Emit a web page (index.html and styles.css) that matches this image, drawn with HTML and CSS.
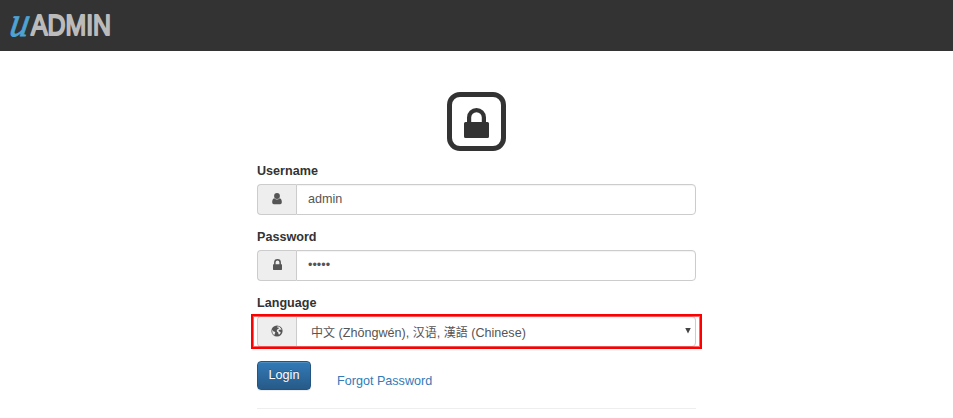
FILE: index.html
```html
<!DOCTYPE html>
<html lang="en">
<head>
<meta charset="utf-8">
<title>uAdmin</title>
<link rel="stylesheet" href="styles.css">
</head>
<body>
<header class="navbar">
  <svg class="logo" width="130" height="51" viewBox="0 0 130 51" role="img" aria-label="uADMIN">
    <text class="logo-u" transform="translate(8.500 35.500) skewX(-10)" x="0" y="0" textLength="19" lengthAdjust="spacingAndGlyphs">u</text>
    <text class="logo-admin" x="31" y="34.500" textLength="80" lengthAdjust="spacingAndGlyphs">ADMIN</text>
  </svg>
</header>
<main class="login">
  <div class="badge">
    <svg width="25" height="30" viewBox="0 0 25 30"><path fill="#333" fill-rule="evenodd" d="M3 14V9.500a9.500 9.500 0 0 1 19 0V14h1.500a1.500 1.500 0 0 1 1.500 1.500v13a1.500 1.500 0 0 1-1.500 1.500h-22A1.500 1.500 0 0 1 0 28.500v-13A1.500 1.500 0 0 1 1.500 14zM7.200 14h10.600V9.500a5.300 5.300 0 0 0-10.600 0z"/></svg>
  </div>
  <form>
    <label for="user">Username</label>
    <div class="group">
      <span class="addon"><svg width="10" height="12" viewBox="0 0 10 12"><circle cx="5" cy="3" r="2.900"/><path d="M2.300 5.200Q5 7.600 7.700 5.200Q10 5.800 9.800 9.600Q9.700 11.300 8.200 11.300H1.800Q.3 11.300.2 9.600Q0 5.800 2.300 5.200z"/></svg></span>
      <input id="user" class="control" type="text" value="admin">
    </div>
    <label>Password</label>
    <div class="group">
      <span class="addon"><svg width="9" height="11" viewBox="0 0 25 30"><path fill-rule="evenodd" d="M3 14V9.500a9.500 9.500 0 0 1 19 0V14h1.500a1.500 1.500 0 0 1 1.500 1.500v13a1.500 1.500 0 0 1-1.500 1.500h-22A1.500 1.500 0 0 1 0 28.500v-13A1.500 1.500 0 0 1 1.500 14zM7.200 14h10.600V9.500a5.300 5.300 0 0 0-10.600 0z"/></svg></span>
      <div class="control dots">•••••</div>
    </div>
    <label>Language</label>
    <div class="group marked">
      <span class="addon"><svg width="12" height="12" viewBox="0 0 12 12"><circle cx="6" cy="6" r="5.600"/><path fill="#eee" d="M6.400 1.200l2 .5 1.600 1.700.5 1.700-1.200-.5-1.500.3-.3 1.200 1.200.6 1 .2-.4 1.600-1.300 1.300-.6-1.100-.2-1.300-1.300-.9-.1-1.500 1.400-1.200 1-.5-.8-.7-.8.3zM1 4.800l1.300 1.400 1.900.8-.1 1.300-.7.9.3 1.300L1.700 8.800z"/></svg></span>
      <div class="control select"><span><span class="han">中文</span> (Zhōngwén), <span class="han">汉语</span>, <span class="han">漢語</span> (Chinese)</span><i class="arrow"></i></div>
    </div>
    <div class="actions">
      <button type="button" class="btn">Login</button>
      <a class="forgot" href="#">Forgot Password</a>
    </div>
    <hr>
  </form>
</main>
</body>
</html>
```
FILE: styles.css
```css
* { box-sizing: border-box; }
body {
  margin: 0;
  height: 418px;
  overflow: hidden;
  background: #fff;
  color: #333;
  font: 12.6px/18px "Liberation Sans", "Noto Sans CJK SC", sans-serif;
}
.navbar { height: 51px; background: #333; }
.logo { display: block; overflow: visible; }
.logo-u {
  font: italic 42px "Liberation Serif", serif;
  fill: #4ea3d3;
  stroke: #4ea3d3;
  stroke-width: .8;
}
.logo-admin {
  font: 30px "Liberation Sans", sans-serif;
  fill: #bbb;
  stroke: #bbb;
  stroke-width: 2;
  stroke-linejoin: round;
}
.login { width: 439px; margin-left: 257px; padding-top: 41px; }
.badge {
  display: flex;
  justify-content: center;
  align-items: center;
  width: 59px;
  height: 59px;
  margin: 0 0 11px 190px;
  padding-top: 3px;
  border: 5px solid #333;
  border-radius: 13px;
}
label { display: block; height: 22px; font-weight: 700; }
.group { display: flex; height: 31px; margin-bottom: 13px; }
.addon {
  display: flex;
  align-items: center;
  justify-content: center;
  width: 39px;
  background: #eee;
  border: 1px solid #ccc;
  border-right: 0;
  border-radius: 4px 0 0 4px;
  fill: #555;
}
.addon svg { margin-bottom: 2px; }
.control {
  flex: 1;
  min-width: 0;
  padding: 0 11px 2px;
  background: #fff;
  border: 1px solid #ccc;
  border-radius: 0 4px 4px 0;
  box-shadow: inset 0 1px 1px rgba(0, 0, 0, .05);
  color: #555;
  font: inherit;
  outline: 0;
}
.dots { line-height: 29px; }
.marked { position: relative; }
.marked::after {
  content: "";
  position: absolute;
  inset: -2px -6px;
  border: 2px solid #f00;
  box-shadow: inset 0 0 0 1px rgba(255, 0, 0, .6);
}
.select { display: flex; align-items: center; justify-content: space-between; padding: 2px 4px 0 14px; }
.han { font-size: 12px; }
.arrow {
  width: 6px;
  height: 6px;
  margin-bottom: 4px;
  background: #444;
  clip-path: polygon(0 0, 100% 0, 50% 100%);
}
.actions { display: flex; align-items: flex-start; }
.btn {
  width: 54px;
  height: 29px;
  margin-top: 1px;
  padding: 0 0 1px;
  border: 1px solid #245580;
  border-radius: 4px;
  background: linear-gradient(#337ab7, #265a88);
  box-shadow: inset 0 1px 0 rgba(255, 255, 255, .15), 0 1px 1px rgba(0, 0, 0, .075);
  color: #fff;
  font: inherit;
  text-shadow: 0 -1px 0 rgba(0, 0, 0, .2);
}
.forgot { margin: 12px 0 0 26px; color: #337ab7; text-decoration: none; }
hr { margin: 18px 0 0; border: 0; border-top: 1px solid #eee; }
```
